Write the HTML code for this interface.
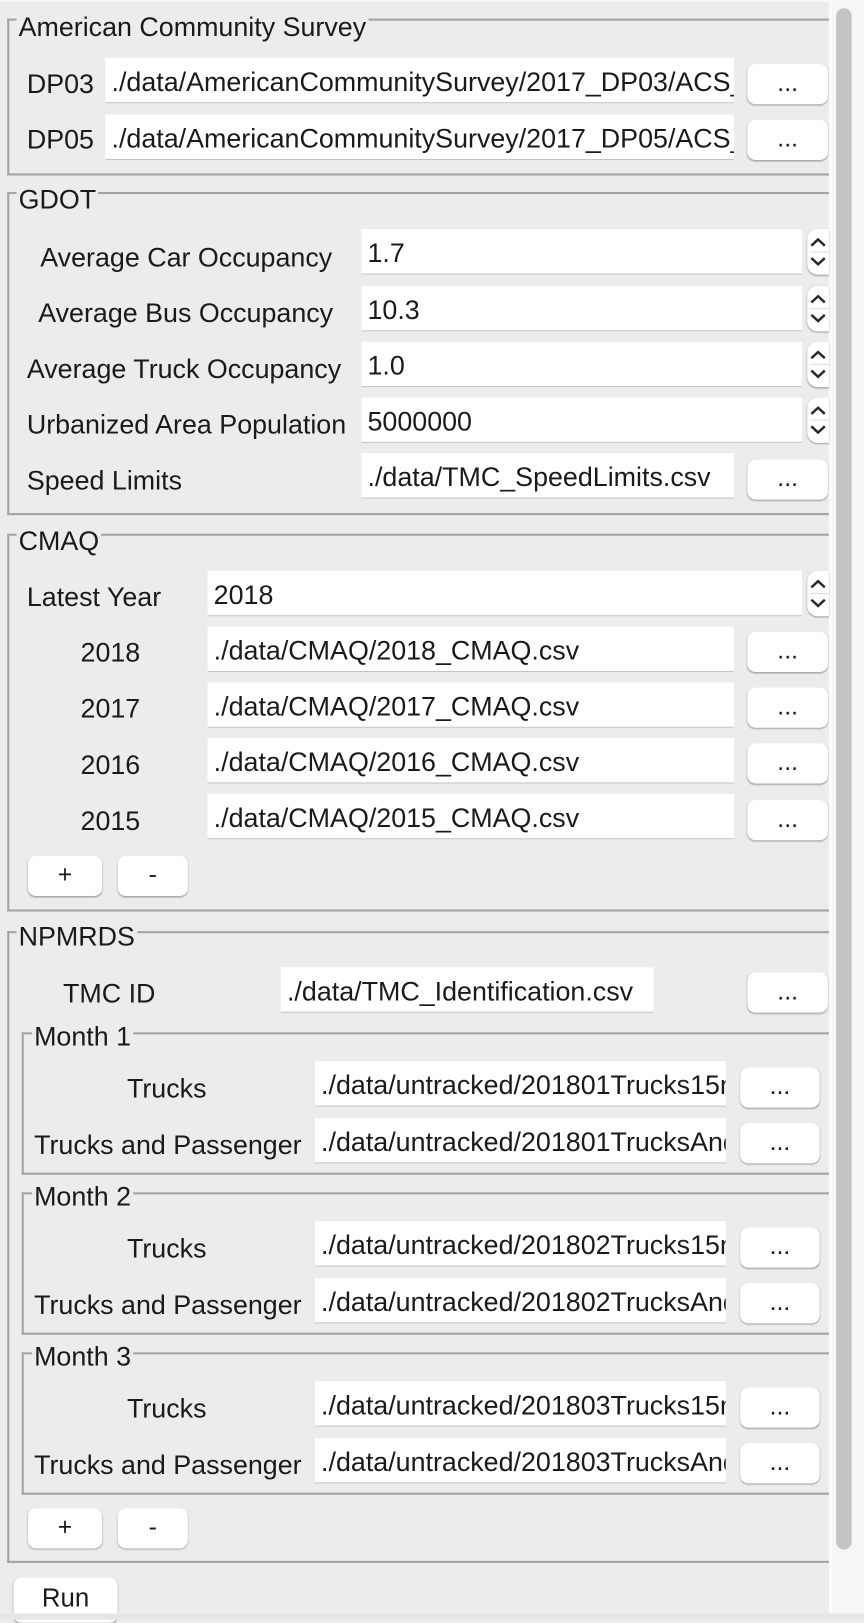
<!DOCTYPE html>
<html><head><meta charset="utf-8"><style>
html,body{margin:0;padding:0;width:864px;height:1619px;overflow:hidden;background:#ececec;}
#w{position:absolute;left:0;top:0;width:837px;height:1569px;transform:scale(1.0323);transform-origin:0 0;font-family:"Liberation Sans",sans-serif;font-size:26px;color:#1a1a1a;}
#w div{position:absolute;box-sizing:border-box;}
.t{white-space:nowrap;line-height:30px;margin-top:2px;}
.f{background:#fff;height:44px;border-bottom:1.5px solid #c4c4c4;padding-left:6px;line-height:46px;white-space:nowrap;overflow:hidden;}
.b{background:#fff;border-radius:8px;height:39px;box-shadow:0 1px 1.5px rgba(0,0,0,.3);text-align:center;line-height:38px;font-size:24px;}
.h{height:2px;background:#a3a3a3;}
.v{width:2px;background:#a3a3a3;}
.g{background:#ececec;padding:0 2px;}
.sp{width:21px;height:44px;background:#fff;border-radius:10px 0 0 10px;box-shadow:0 1px 1.5px rgba(0,0,0,.3);}
.sp svg{position:absolute;left:0;top:0}
</style></head><body><div id="w">
<div style="left:0;top:0;width:806px;height:2px;background:#f8f8f8"></div>
<!-- scrollbar -->
<div style="left:803px;top:0;width:34px;height:1569px;background:#f6f6f6"></div>
<div style="left:803px;top:0;width:3px;height:1569px;background:#fbfbfb"></div>
<div style="left:810px;top:8px;width:15px;height:1493px;background:#c4c4c4;border-radius:8px"></div>

<!-- ACS -->
<div class="v" style="left:7px;top:18px;height:152px"></div>
<div class="h" style="left:7px;top:18px;width:796px"></div>
<div class="h" style="left:7px;top:168px;width:796px"></div>
<div class="t g" style="left:16px;top:9px">American Community Survey</div>
<div class="t" style="left:26px;top:64px">DP03</div>
<div class="f" style="left:102px;top:56px;width:609px">./data/AmericanCommunitySurvey/2017_DP03/ACS_17_5YR_DP03</div>
<div class="b" style="left:724px;top:62px;width:78px">...</div>
<div class="t" style="left:26px;top:118px">DP05</div>
<div class="f" style="left:102px;top:111px;width:609px">./data/AmericanCommunitySurvey/2017_DP05/ACS_17_5YR_DP05</div>
<div class="b" style="left:724px;top:116px;width:78px">...</div>

<!-- GDOT -->
<div class="v" style="left:7px;top:186px;height:313px"></div>
<div class="h" style="left:7px;top:186px;width:796px"></div>
<div class="h" style="left:7px;top:497px;width:796px"></div>
<div class="t g" style="left:16px;top:176px">GDOT</div>
<div class="t" style="left:39px;top:232px">Average Car Occupancy</div>
<div class="f" style="left:350px;top:222px;width:427px">1.7</div>
<div class="sp" style="left:782px;top:222px"><svg width="21" height="44"><path d="M4 16 L10.5 10 L17 16 M4 28 L10.5 34 L17 28" stroke="#2a2a2a" stroke-width="2.4" fill="none"/><path d="M2 22 H21" stroke="#ddd" stroke-width="1"/></svg></div>
<div class="t" style="left:37px;top:286px">Average Bus Occupancy</div>
<div class="f" style="left:350px;top:277px;width:427px">10.3</div>
<div class="sp" style="left:782px;top:277px"><svg width="21" height="44"><path d="M4 16 L10.5 10 L17 16 M4 28 L10.5 34 L17 28" stroke="#2a2a2a" stroke-width="2.4" fill="none"/><path d="M2 22 H21" stroke="#ddd" stroke-width="1"/></svg></div>
<div class="t" style="left:26px;top:340px">Average Truck Occupancy</div>
<div class="f" style="left:350px;top:331px;width:427px">1.0</div>
<div class="sp" style="left:782px;top:331px"><svg width="21" height="44"><path d="M4 16 L10.5 10 L17 16 M4 28 L10.5 34 L17 28" stroke="#2a2a2a" stroke-width="2.4" fill="none"/><path d="M2 22 H21" stroke="#ddd" stroke-width="1"/></svg></div>
<div class="t" style="left:26px;top:394px">Urbanized Area Population</div>
<div class="f" style="left:350px;top:385px;width:427px">5000000</div>
<div class="sp" style="left:782px;top:385px"><svg width="21" height="44"><path d="M4 16 L10.5 10 L17 16 M4 28 L10.5 34 L17 28" stroke="#2a2a2a" stroke-width="2.4" fill="none"/><path d="M2 22 H21" stroke="#ddd" stroke-width="1"/></svg></div>
<div class="t" style="left:26px;top:448px">Speed Limits</div>
<div class="f" style="left:350px;top:439px;width:361px">./data/TMC_SpeedLimits.csv</div>
<div class="b" style="left:724px;top:445px;width:78px">...</div>

<!-- CMAQ -->
<div class="v" style="left:7px;top:517px;height:366px"></div>
<div class="h" style="left:7px;top:517px;width:796px"></div>
<div class="h" style="left:7px;top:881px;width:796px"></div>
<div class="t g" style="left:16px;top:507px">CMAQ</div>
<div class="t" style="left:26px;top:561px">Latest Year</div>
<div class="f" style="left:201px;top:553px;width:576px">2018</div>
<div class="sp" style="left:782px;top:553px"><svg width="21" height="44"><path d="M4 16 L10.5 10 L17 16 M4 28 L10.5 34 L17 28" stroke="#2a2a2a" stroke-width="2.4" fill="none"/><path d="M2 22 H21" stroke="#ddd" stroke-width="1"/></svg></div>
<div class="t" style="left:78px;top:615px">2018</div>
<div class="f" style="left:201px;top:607px;width:510px">./data/CMAQ/2018_CMAQ.csv</div>
<div class="b" style="left:724px;top:612px;width:78px">...</div>
<div class="t" style="left:78px;top:669px">2017</div>
<div class="f" style="left:201px;top:661px;width:510px">./data/CMAQ/2017_CMAQ.csv</div>
<div class="b" style="left:724px;top:666px;width:78px">...</div>
<div class="t" style="left:78px;top:724px">2016</div>
<div class="f" style="left:201px;top:715px;width:510px">./data/CMAQ/2016_CMAQ.csv</div>
<div class="b" style="left:724px;top:720px;width:78px">...</div>
<div class="t" style="left:78px;top:778px">2015</div>
<div class="f" style="left:201px;top:769px;width:510px">./data/CMAQ/2015_CMAQ.csv</div>
<div class="b" style="left:724px;top:775px;width:78px">...</div>
<div class="b" style="left:27px;top:829px;width:72px">+</div>
<div class="b" style="left:114px;top:829px;width:68px">-</div>

<!-- NPMRDS -->
<div class="v" style="left:7px;top:902px;height:612px"></div>
<div class="h" style="left:7px;top:902px;width:796px"></div>
<div class="h" style="left:7px;top:1512px;width:796px"></div>
<div class="t g" style="left:16px;top:890px">NPMRDS</div>
<div class="t" style="left:61px;top:945px">TMC ID</div>
<div class="f" style="left:272px;top:937px;width:361px">./data/TMC_Identification.csv</div>
<div class="b" style="left:724px;top:942px;width:78px">...</div>

<!-- Month 1 -->
<div class="v" style="left:21px;top:1000px;height:138px"></div>
<div class="h" style="left:21px;top:1000px;width:782px"></div>
<div class="h" style="left:21px;top:1136px;width:782px"></div>
<div class="t g" style="left:31px;top:987px">Month 1</div>
<div class="t" style="left:123px;top:1037px">Trucks</div>
<div class="f" style="left:305px;top:1028px;width:398px">./data/untracked/201801Trucks15min.csv</div>
<div class="b" style="left:717px;top:1034px;width:77px">...</div>
<div class="t" style="left:33px;top:1092px">Trucks and Passenger</div>
<div class="f" style="left:305px;top:1083px;width:398px">./data/untracked/201801TrucksAndPassenger</div>
<div class="b" style="left:717px;top:1088px;width:77px">...</div>

<!-- Month 2 -->
<div class="v" style="left:21px;top:1155px;height:138px"></div>
<div class="h" style="left:21px;top:1155px;width:782px"></div>
<div class="h" style="left:21px;top:1291px;width:782px"></div>
<div class="t g" style="left:31px;top:1142px">Month 2</div>
<div class="t" style="left:123px;top:1192px">Trucks</div>
<div class="f" style="left:305px;top:1183px;width:398px">./data/untracked/201802Trucks15min.csv</div>
<div class="b" style="left:717px;top:1189px;width:77px">...</div>
<div class="t" style="left:33px;top:1247px">Trucks and Passenger</div>
<div class="f" style="left:305px;top:1238px;width:398px">./data/untracked/201802TrucksAndPassenger</div>
<div class="b" style="left:717px;top:1243px;width:77px">...</div>

<!-- Month 3 -->
<div class="v" style="left:21px;top:1310px;height:138px"></div>
<div class="h" style="left:21px;top:1310px;width:782px"></div>
<div class="h" style="left:21px;top:1446px;width:782px"></div>
<div class="t g" style="left:31px;top:1297px">Month 3</div>
<div class="t" style="left:123px;top:1347px">Trucks</div>
<div class="f" style="left:305px;top:1338px;width:398px">./data/untracked/201803Trucks15min.csv</div>
<div class="b" style="left:717px;top:1344px;width:77px">...</div>
<div class="t" style="left:33px;top:1402px">Trucks and Passenger</div>
<div class="f" style="left:305px;top:1393px;width:398px">./data/untracked/201803TrucksAndPassenger</div>
<div class="b" style="left:717px;top:1398px;width:77px">...</div>

<div class="b" style="left:27px;top:1461px;width:72px">+</div>
<div class="b" style="left:114px;top:1461px;width:68px">-</div>

<div style="left:0;top:1516px;width:803px;height:53px;background:#ececec"></div>
<div class="b" style="left:13px;top:1528px;width:101px;height:44px;font-size:25px;line-height:40px">Run</div>
<div style="left:0;top:1563px;width:837px;height:6px;background:#e6e6e6"></div>
</div></body></html>
